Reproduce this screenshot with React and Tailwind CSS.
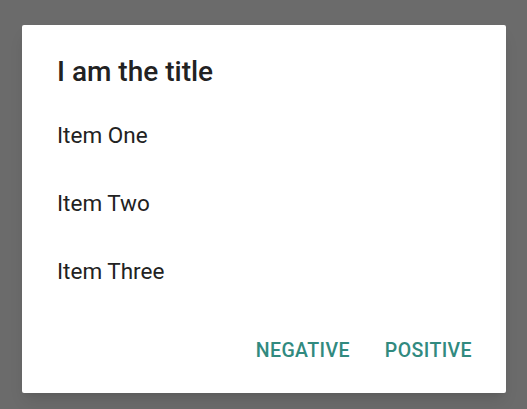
import React from 'react';

const items = ['Item One', 'Item Two', 'Item Three'];

const App = () => {
    return (
        <div className="w-[527px] h-[409px] bg-[#6b6b6b] pt-[25px] pl-[22px] font-['Roboto',sans-serif]">
            <div className="w-[484px] h-[368px] bg-white rounded-[2px] shadow-lg flex flex-col">
                <div className="pt-[31px] px-[35px] text-[28px] leading-[32px] font-medium text-[#222222]">
                    I am the title
                </div>
                <div className="mt-[14px] flex flex-col">
                    {items.map((item) => (
                        <div key={item} className="h-[68px] flex items-center px-[35px] text-[22.5px] text-[#222222]">
                            {item}
                        </div>
                    ))}
                </div>
                <div className="mt-[27px] flex justify-end gap-[11px] pr-[22px]">
                    <button className="h-[36px] px-[12px] text-[19.5px] font-medium text-[#318a7f] tracking-[0.4px]">
                        NEGATIVE
                    </button>
                    <button className="h-[36px] px-[12px] text-[19.5px] font-medium text-[#318a7f] tracking-[0.4px]">
                        POSITIVE
                    </button>
                </div>
            </div>
        </div>
    );
};

export default App;
